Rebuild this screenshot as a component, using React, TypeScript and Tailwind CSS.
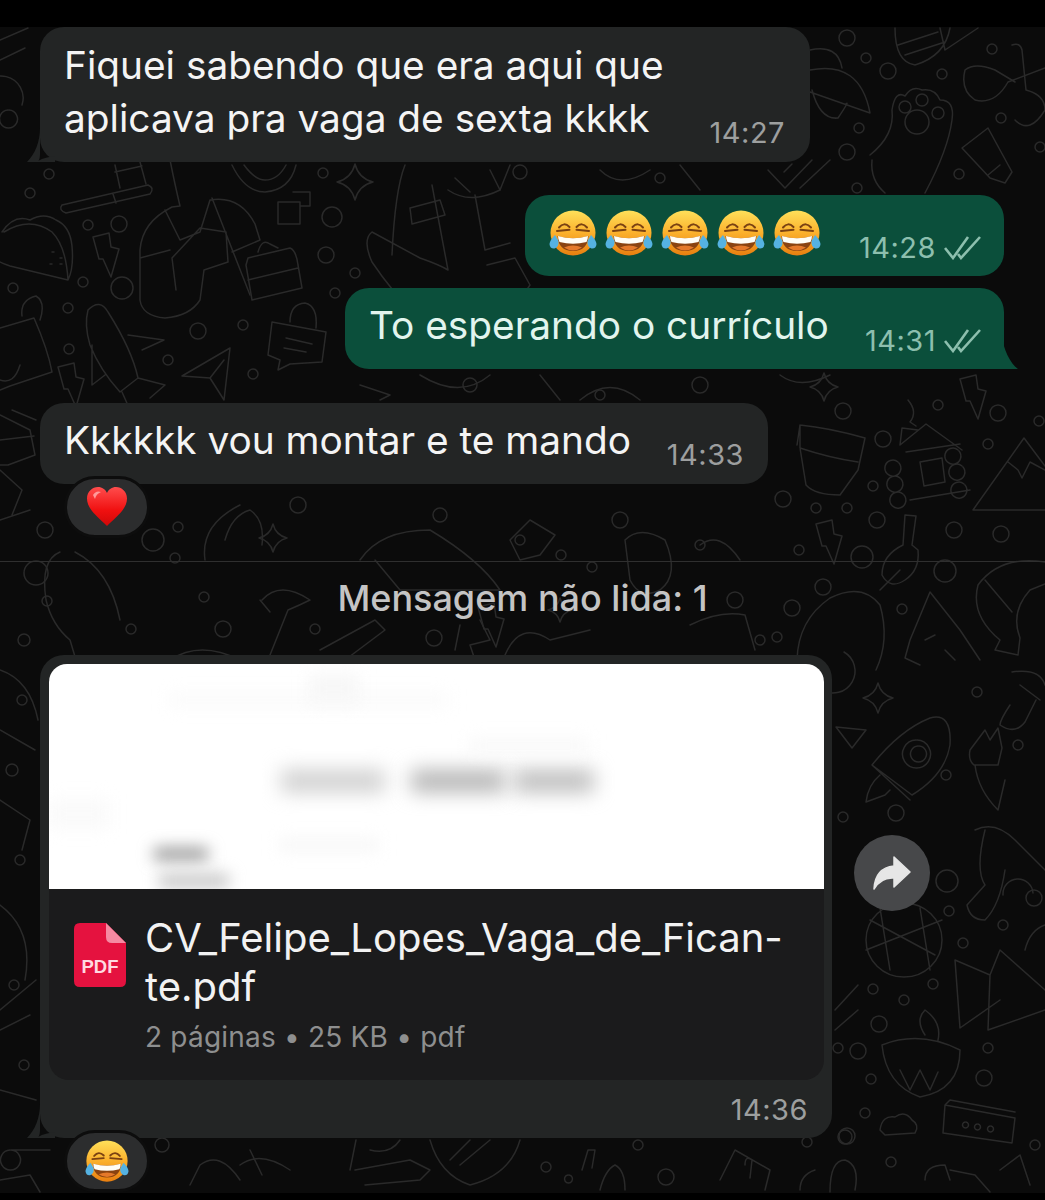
import React from 'react';

const FONT = 'font-["Inter","Liberation_Sans",sans-serif]';

// dots of the wallpaper: cx, cy, r
const dots: number[][] = [
    [49, 174, 5], [30, 193, 5], [88, 225, 5], [119, 224, 8], [83, 282, 5], [122, 288, 11], [13, 288, 5], [68, 308, 5],
    [69, 349, 5], [168, 360, 5], [198, 331, 8], [243, 325, 5], [253, 374, 5], [323, 173, 5], [332, 217, 10], [326, 255, 8],
    [355, 273, 5], [335, 293, 5], [847, 38, 8], [866, 58, 5], [888, 71, 8], [942, 74, 5], [992, 49, 5], [859, 128, 5],
    [847, 152, 8], [1001, 118, 5], [959, 174, 5], [1040, 147, 5], [857, 188, 5], [843, 411, 8], [938, 405, 5], [998, 413, 8],
    [1039, 421, 5], [883, 439, 8], [988, 444, 5], [873, 486, 5], [783, 499, 8], [816, 508, 5], [847, 508, 5], [877, 520, 8],
    [799, 550, 5], [862, 557, 11], [954, 530, 8], [1001, 534, 8], [945, 571, 11], [823, 587, 8], [792, 608, 8], [777, 637, 5],
    [902, 609, 5], [947, 881, 11], [949, 911, 5], [1034, 898, 8], [1003, 925, 5], [963, 943, 5], [873, 989, 5], [933, 984, 5],
    [904, 1000, 5], [879, 1024, 8], [858, 1051, 8], [838, 1048, 5], [988, 1048, 5], [984, 1078, 8], [871, 1079, 5], [865, 1113, 5],
    [847, 1136, 8], [1035, 1145, 5], [807, 1142, 5], [977, 692, 5], [1018, 745, 5], [946, 775, 5], [896, 813, 8], [843, 817, 5],
    [153, 540, 11], [36, 573, 12], [47, 601, 5], [131, 629, 5], [223, 629, 8], [204, 597, 5], [315, 629, 5], [434, 638, 8],
    [561, 555, 5], [592, 567, 5], [45, 530, 8], [178, 527, 5], [298, 505, 8], [175, 558, 5], [162, 1145, 7], [546, 1167, 5],
    [638, 1145, 5], [845, 1137, 7], [891, 1162, 5], [666, 1177, 8], [14, 985, 5], [24, 1065, 5], [12, 770, 6], [22, 700, 5],
    [440, 515, 7], [520, 540, 5], [620, 520, 8], [700, 545, 5], [735, 600, 8], [760, 640, 5], [600, 395, 5], [470, 385, 7],
    [700, 385, 8], [660, 178, 5], [520, 172, 7], [20, 860, 5], [24, 640, 6],
];

const star = (cx: number, cy: number, r: number) =>
    `M${cx} ${cy - r}Q${cx + r * 0.2} ${cy - r * 0.2} ${cx + r} ${cy}Q${cx + r * 0.2} ${cy + r * 0.2} ${cx} ${cy + r}Q${cx - r * 0.2} ${cy + r * 0.2} ${cx - r} ${cy}Q${cx - r * 0.2} ${cy - r * 0.2} ${cx} ${cy - r}Z`;

const bolt = (x: number, y: number) =>
    `M${x - 12} ${y - 18}L${x + 4} ${y - 22}L${x + 6} ${y - 8}L${x + 14} ${y - 6}L${x + 6} ${y + 22}L${x - 2} ${y + 4}L${x - 6} ${y + 4}Z`;

const doodles: string[] = [
    star(355, 182, 18), star(824, 387, 14), star(878, 698, 15), star(273, 538, 14), star(560, 610, 12),
    bolt(105, 255), bolt(972, 397), bolt(828, 542), bolt(70, 385), bolt(490, 625),
    // pen, top left
    'M62 205L148 185Q155 188 150 194L66 213Q58 210 62 205ZM113 194L116 203',
    'M115 165L120 188M140 162L146 184M115 172L142 166',
    // taco
    'M2 232Q14 214 30 220Q44 212 56 220Q70 226 72 246Q74 268 68 280L10 266Q-2 262 -6 258M4 232Q30 216 52 232Q66 246 68 280M52 252h2M60 258h2M50 264h2M60 264h2',
    // person with phone
    'M170 160Q175 185 180 206L172 207Q142 222 140 250L140 300Q142 316 165 318Q190 316 200 300L204 270L228 262L226 232L200 228L172 258L176 290M140 258L170 250M165 210L180 240L200 232L210 200Q240 195 255 224L260 240L232 252M212 198L250 295',
    // briefcase
    'M248 258L290 248Q296 250 298 265L302 288L252 300L246 265ZM248 280L298 268M258 252Q262 238 270 244L278 248',
    // legs on the middle
    'M405 165Q395 190 392 255M410 208L440 200L445 215L412 224ZM432 185L448 270Q440 265 420 258L372 232Q362 240 372 262Q392 292 420 320M448 190Q470 205 500 190L510 165M475 195L485 250L510 243M487 265L515 258L530 285L520 300Q490 300 485 322',
    // square and arcs
    'M278 202L300 202L300 224L278 224ZM293 192L310 192L310 206L300 206',
    'M232 165Q245 192 265 192Q290 190 296 165M244 165Q255 180 265 180Q278 180 286 165',
    // shuttle
    'M88 310Q100 298 108 312Q132 350 138 378L120 392Q100 370 90 345Q84 325 88 310ZM128 335L164 340L142 350M92 345L92 385L105 375M122 392L130 410M138 378L165 385L150 398',
    // paper plane
    'M182 376L230 348L224 400L210 378L182 376ZM210 378L224 360',
    // chat with lock
    'M272 322L326 332L322 362L290 364L278 370L280 360L268 355ZM290 322Q290 304 305 303Q318 306 316 328M286 338L312 344M284 348L306 352',
    // bag left
    'M0 328L34 318Q48 350 52 372L10 386L0 390M22 316Q20 300 36 296Q46 302 40 320M0 380Q14 385 20 365',
    // hat over first bubble
    'M810 70Q860 60 870 113L810 92M812 90Q820 120 838 118Q850 100 846 104',
    'M810 50Q838 44 842 68',
    'M895 28Q895 62 915 65Q945 56 950 28M898 45L938 32M905 55L945 42M940 28L945 50Q960 40 978 28',
    // paw
    'M870 155Q895 135 892 110Q895 90 905 96Q912 85 922 90Q935 88 940 100Q955 100 952 120Q948 150 925 193M872 160Q870 180 885 193',
    'M905 122a12 12 0 1 0 24 0a12 12 0 1 0 -24 0ZM899 107a6 6 0 1 0 12 0a6 6 0 1 0 -12 0ZM916 100a6 6 0 1 0 12 0a6 6 0 1 0 -12 0ZM932 113a6 6 0 1 0 12 0a6 6 0 1 0 -12 0Z',
    // tube
    'M962 148L988 128L1012 172L1005 183L990 178ZM988 175L1000 165',
    // scissors
    'M1045 68L1008 82Q995 105 975 100Q960 90 965 70Q975 62 995 70L1015 82M1012 45Q1020 42 1022 50L1026 90Q1045 95 1045 110Q1030 135 1015 120',
    // tick pair
    'M768 170L785 188L812 160M784 172L792 164M800 188L830 160',
    // pot
    'M800 425Q830 428 865 438L858 470L840 495Q815 495 806 485L800 448ZM800 448Q830 458 858 462M800 425L797 445',
    // cabin
    'M900 445L926 424L962 450M900 445L902 428L918 430M906 452L960 444M920 462L942 458L945 482L924 486ZM898 462a8 8 0 1 0 1 1M900 478a8 8 0 1 0 1 1M903 494a8 8 0 1 0 1 1M958 450a8 8 0 1 0 1 1M962 466a8 8 0 1 0 1 1M964 484a8 8 0 1 0 1 1M910 500L970 490',
    'M908 400Q918 412 910 422L916 426',
    // mountain
    'M973 510L1024 438L1045 466M973 510L1045 510M1008 462L1018 470L1022 478L1030 462L1045 470',
    // bottle
    'M905 515L903 545Q882 555 882 575Q890 590 905 580Q920 570 918 550L912 545L916 516Z',
    // avocado
    'M797 660Q798 620 830 598Q862 582 880 605Q890 640 876 670M814 660a22 22 0 1 0 30 -8M880 590L900 570',
    // tree
    'M930 592L910 640L905 658L920 665M930 592L960 630L980 660M925 640L935 635M945 650L955 660',
    // shrimp
    'M1045 562Q1000 555 978 585Q970 615 1000 640L995 650L1018 655L1020 638Q1010 612 1030 590L1045 584M985 580L1012 612',
    // rocket right
    'M872 765Q900 730 930 718Q952 712 950 745Q945 775 912 795ZM872 765L910 800M916 740a14 14 0 1 0 1 0M918 746a8 8 0 1 0 1 0M880 775Q868 785 866 802L885 795L890 790',
    // plane
    'M836 727L866 730L852 748Z',
    // hand peace
    'M970 750L985 730L990 740L998 728L1002 748L998 765L974 765Q968 760 970 750ZM975 765Q978 790 998 810L1005 780',
    'M1010 705Q1000 720 1000 725Q1015 735 1025 722L1036 700M1012 672Q1040 668 1045 685M1020 685L1040 700',
    // globe
    'M866 940a38 37 0 1 0 76 0a38 37 0 1 0 -76 0ZM870 920L935 955M866 950L942 920M880 908L890 970M920 908L930 970',
    // tent
    'M955 960L990 975L1000 950L1045 990M955 960L960 1028L1000 1000M990 975L988 1030L1045 1010',
    // lamp
    'M882 1045Q920 1030 960 1050Q960 1090 920 1097Q886 1085 882 1045ZM925 1035Q915 1020 925 1010Q942 1022 938 1040M900 1070L910 1090L920 1070L930 1090L938 1072',
    // box 000
    'M945 1105L1015 1118L1012 1143L943 1133ZM945 1105L950 1100L1015 1112',
    'M965 1122a3 3 0 1 0 1 0M977 1124a3 3 0 1 0 1 0M990 1126a3 3 0 1 0 1 0',
    // hand next to forward
    'M975 830Q995 820 1015 840L1045 870M985 830Q975 870 985 885L967 905Q970 920 985 920Q1000 905 1005 870M1003 895a8 8 0 0 1 30 -2',
    'M835 1010L858 985M835 1030L858 1010',
    // cloud
    'M880 1130Q882 1115 895 1117Q905 1110 912 1120Q920 1125 915 1133L885 1135Z',
    'M1025 950Q1030 930 1045 925',
    // under the bubbles
    'M190 1185L200 1165Q220 1150 240 1180M240 1165Q260 1150 290 1170M250 1150L262 1175',
    'M350 1170L356 1140M365 1185L420 1180L430 1170L410 1160L355 1170M370 1150Q390 1155 400 1140',
    'M430 1140Q440 1175 470 1185Q510 1175 520 1140M450 1160L470 1140M460 1165L490 1140',
    'M568 1175a4 4 0 1 0 1 0M582 1170L588 1150L595 1150L592 1168',
    'M600 1190Q605 1170 615 1165Q625 1170 625 1190',
    'M720 1180L735 1150L770 1170L765 1190M745 1165Q745 1155 752 1160L750 1178',
    'M830 1192Q830 1160 845 1160Q860 1165 855 1190M800 1190Q800 1175 815 1170',
    'M925 1180Q925 1165 945 1165L950 1180M950 1170L975 1175L990 1192',
    'M1000 1170L1020 1155L1030 1185',
    // reaction row and divider row
    'M60 552Q40 560 46 600Q52 625 70 640L76 660M75 552Q110 570 120 620',
    'M262 600Q280 580 310 600Q300 605 288 610L270 655M270 612L260 600',
    'M170 660Q200 640 240 660',
    'M320 650L375 620L385 630L345 660',
    'M460 625L455 650M480 620L490 640L470 645L475 660',
    'M225 540Q232 515 250 510Q265 520 262 545M205 560Q200 525 240 505',
    'M360 560Q380 530 430 530Q480 560 500 590L400 590L375 560',
    'M510 540L530 520L555 535L540 555L520 560Z',
    'M625 540Q640 525 665 540Q680 575 660 590Q640 600 630 580Z',
    'M700 545Q720 530 740 560M690 625Q720 610 745 615L755 650',
    'M0 520L30 510M0 470L22 490L12 515M12 410L36 420',
    'M505 655Q520 620 550 640L590 630',
    'M0 415L30 430L35 455L8 465L0 465M0 440L34 436',
    'M0 120a22 22 0 1 1 22 -15M8 110a9 9 0 1 0 1 0',
    'M0 40L28 28M0 60L25 48',
    // left column next to the file bubble
    'M0 905Q34 930 25 980M0 1010L36 980M0 1030L30 1015',
    'M0 670Q30 680 38 720M0 730L35 750M0 800L30 820L22 850',
    'M0 1090L36 1100M10 1150a10 10 0 1 0 1 0L50 1150M0 1180L30 1175L40 1192',
    // chat gaps
    'M360 385L390 395L380 400M420 375Q460 400 490 375M540 375L560 400M580 400Q610 375 640 400',
    'M455 178L470 192M490 170L500 190M600 170Q620 190 650 170M680 165L700 190',
    'M780 375Q800 390 830 375',
];

const JoyEmoji = ({ size, id }: { size: number; id: string }) => (
    <svg width={size} height={size} viewBox="0 0 48 48" className="block shrink-0">
        <defs>
            <linearGradient id={id} x1="0" y1="0" x2="0" y2="1">
                <stop offset="0" stopColor="#ffe05a" />
                <stop offset="0.5" stopColor="#fbb02c" />
                <stop offset="1" stopColor="#e87f10" />
            </linearGradient>
        </defs>
        <circle cx="24" cy="24" r="22.5" fill={`url(#${id})`} />
        <path d="M8.5 27Q24 31.5 39.5 27Q38.5 42 24 42Q9.5 42 8.5 27Z" fill="#8a4310" />
        <path d="M9 27Q24 31.5 39 27Q39 30.5 37.5 33Q24 36.5 10.5 33Q9 30.5 9 27Z" fill="#fffdf5" />
        <path d="M15 38.5Q24 34.5 33 38.5Q28.5 41.5 24 41.5Q19.5 41.5 15 38.5Z" fill="#e5792a" />
        <path d="M10 18.5Q15 12.5 20.5 18M8 22L20.5 20.8M38 18.5Q33 12.5 27.5 18M40 22L27.5 20.8" fill="none" stroke="#7a4112" strokeWidth="2" strokeLinecap="round" />
        <path d="M6 26Q1 31 0.5 35Q1 40 5.5 39.5Q10 38 9.5 32Z" fill="#55b2e2" />
        <path d="M42 26Q47 31 47.5 35Q47 40 42.5 39.5Q38 38 38.5 32Z" fill="#55b2e2" />
    </svg>
);

const HeartEmoji = () => (
    <svg width="42" height="42" viewBox="0 0 42 42" className="block">
        <defs>
            <linearGradient id="heart" x1="0" y1="0" x2="0" y2="1">
                <stop offset="0" stopColor="#ff4d4d" />
                <stop offset="0.6" stopColor="#f01010" />
                <stop offset="1" stopColor="#d00808" />
            </linearGradient>
        </defs>
        <path d="M21 40C11 30 1 23 1 12.5C1 5.5 6.5 1 12 1C16 1 19.5 3.5 21 7C22.5 3.5 26 1 30 1C35.5 1 41 5.5 41 12.5C41 23 31 30 21 40Z" fill="url(#heart)" />
        <path d="M7 9Q10 4 15 6Q10 8 9 13Z" fill="#ff9a9a" />
    </svg>
);

const DoubleTick = () => (
    <svg width="37" height="24" viewBox="0 0 37 24" fill="none" stroke="#8dbfae" strokeWidth="2.6" className="shrink-0">
        <path d="M1 12L9 22L24 1" />
        <path d="M14 18L17 22L36 1" />
    </svg>
);

const Reaction = ({ children }: { children: React.ReactNode }) => (
    <div className="relative ml-[64px] -mt-[8px] flex h-[62px] w-[86px] items-center justify-center rounded-full border-[3px] border-[#0d0d0d] bg-[#2c2d2e]">
        {children}
    </div>
);

const InTail = () => (
    <svg width="40" height="34" viewBox="0 0 40 34" className="absolute bottom-0 left-[-13px]">
        <path d="M13 0C13 14 8 26 0 34H28V28C22 29 16 30 11 33C12 33 13 30 13 26Z" fill="#232525" />
    </svg>
);

const OutTail = () => (
    <svg width="34" height="34" viewBox="0 0 34 34" className="absolute bottom-0 right-[-16px]">
        <path d="M16 0C17 14 24 28 32 34H0V0Z" fill="#0b4f3b" />
    </svg>
);

export default function App() {
    return (
        <div className={`relative flex h-[1200px] w-[1045px] flex-col overflow-hidden bg-[#0b0b0b] ${FONT}`}>
            {/* wallpaper */}
            <svg viewBox="0 0 1045 1200" fill="none" stroke="#2a2a2a" strokeWidth="1.5" strokeLinecap="round" strokeLinejoin="round" className="absolute inset-0 h-[1200px] w-[1045px]">
                {dots.map(([cx, cy, r], i) => (
                    <circle key={i} cx={cx} cy={cy} r={r} />
                ))}
                {doodles.map((d, i) => (
                    <path key={i} d={d} />
                ))}
            </svg>

            <div className="relative h-[27px] shrink-0 bg-black" />

            <div className="relative flex flex-1 flex-col">
                {/* first message */}
                <div className="relative ml-[40px] flex h-[135px] w-[770px] rounded-[24px] bg-[#232525] pl-[24px] pr-[25px] pt-[11px]">
                    <InTail />
                    <p className="relative text-[38.8px] leading-[53px] text-[#f4f4f4]">
                        Fiquei sabendo que era aqui que
                        <br />
                        aplicava pra vaga de sexta kkkk
                    </p>
                    <span className="absolute bottom-[13px] right-[25px] text-[29px] leading-[32px] tracking-[0.5px] text-[#9d9f9f]">14:27</span>
                </div>

                {/* sent */}
                <div className="ml-[525px] mt-[33px] flex h-[81px] w-[479px] items-center rounded-[24px] bg-[#0b4f3b] pl-[24px] pr-[23px]">
                    <div className="-mt-[6px] flex gap-[8px]">
                        <JoyEmoji size={48} id="j1" />
                        <JoyEmoji size={48} id="j2" />
                        <JoyEmoji size={48} id="j3" />
                        <JoyEmoji size={48} id="j4" />
                        <JoyEmoji size={48} id="j5" />
                    </div>
                    <div className="ml-auto mt-[24px] flex items-center gap-[8px]">
                        <span className="text-[29px] leading-[32px] tracking-[0.5px] text-[#8dbfae]">14:28</span>
                        <DoubleTick />
                    </div>
                </div>

                <div className="relative ml-[345px] mt-[12px] flex h-[81px] w-[659px] items-center rounded-[24px] rounded-br-none bg-[#0b4f3b] pl-[24px] pr-[23px]">
                    <OutTail />
                    <span className="relative -mt-[9px] text-[38.8px] leading-[53px] text-[#e2f5ee]">To esperando o currículo</span>
                    <div className="relative ml-auto mt-[24px] flex items-center gap-[8px]">
                        <span className="text-[29px] leading-[32px] tracking-[0.5px] text-[#8dbfae]">14:31</span>
                        <DoubleTick />
                    </div>
                </div>

                {/* received with reaction */}
                <div className="relative ml-[40px] mt-[34px] flex h-[81px] w-[728px] items-center rounded-[24px] bg-[#232525] pl-[24px] pr-[24px]">
                    <span className="-mt-[9px] text-[38.8px] leading-[53px] text-[#f4f4f4]">Kkkkkk vou montar e te mando</span>
                    <span className="ml-auto mt-[22px] text-[29px] leading-[32px] tracking-[0.5px] text-[#9d9f9f]">14:33</span>
                </div>
                <Reaction>
                    <HeartEmoji />
                </Reaction>

                {/* unread divider */}
                <div className="relative mt-[23px] h-px w-full bg-[#2f2f2f]" />
                <div className="relative mt-[15px] text-center text-[36px] font-medium leading-[42px] text-[#c4c4c4]">Mensagem não lida: 1</div>

                {/* file message */}
                <div className="relative mt-[36px] flex">
                    <div className="relative ml-[40px] h-[483px] w-[792px] rounded-[24px] bg-[#232525] pl-[9px] pr-[8px] pt-[9px]">
                        <InTail />
                        <div className="relative h-[225px] overflow-hidden rounded-t-[18px] bg-white">
                            <div className="absolute left-[232px] top-[106px] h-[22px] w-[104px] bg-[#cfcfcf] blur-[10px]" />
                            <div className="absolute left-[362px] top-[106px] h-[22px] w-[94px] bg-[#b4b4b4] blur-[10px]" />
                            <div className="absolute left-[465px] top-[106px] h-[22px] w-[80px] bg-[#bcbcbc] blur-[10px]" />
                            <div className="absolute left-[105px] top-[184px] h-[12px] w-[54px] bg-[#8f8f8f] blur-[8px]" />
                            <div className="absolute left-[110px] top-[210px] h-[14px] w-[70px] bg-[#c4c4c4] blur-[8px]" />
                            <div className="absolute left-[120px] top-[30px] h-[12px] w-[280px] bg-[#fafafa] blur-[8px]" />
                            <div className="absolute left-[260px] top-[10px] h-[30px] w-[50px] bg-[#f7f7f7] blur-[8px]" />
                            <div className="absolute left-[420px] top-[75px] h-[14px] w-[120px] bg-[#f8f8f8] blur-[8px]" />
                            <div className="absolute left-[230px] top-[175px] h-[12px] w-[100px] bg-[#f6f6f6] blur-[8px]" />
                            <div className="absolute left-[0px] top-[135px] h-[30px] w-[60px] bg-[#fafafa] blur-[8px]" />
                        </div>
                        <div className="relative flex h-[191px] rounded-b-[20px] bg-[#1b1b1c] pl-[25px] pt-[22px]">
                            <div className="relative mt-[12px] h-[64px] w-[52px] shrink-0">
                                <svg width="52" height="64" viewBox="0 0 52 64" className="block">
                                    <path d="M6 0H32L52 20V58Q52 64 46 64H6Q0 64 0 58V6Q0 0 6 0Z" fill="#e5123f" />
                                    <path d="M32 0L52 20H38Q32 20 32 14Z" fill="#f58aa2" />
                                </svg>
                                <span className="absolute inset-x-0 top-[34px] text-center font-['Liberation_Sans',sans-serif] text-[18.5px] font-bold leading-[20px] text-[#ffd9e2]">PDF</span>
                            </div>
                            <div className="ml-[19px] mt-[2px]">
                                <p className="text-[40px] leading-[49px] text-[#f2f2f2]">
                                    CV_Felipe_Lopes_Vaga_de_Fican-
                                    <br />
                                    te.pdf
                                </p>
                                <p className="mt-[8px] text-[28px] leading-[36px] tracking-[0.2px] text-[#8e8f8f]">2 páginas • 25 KB • pdf</p>
                            </div>
                        </div>
                        <div className="mt-[14px] pr-[16px] text-right text-[29px] leading-[32px] tracking-[0.5px] text-[#9d9f9f]">14:36</div>
                    </div>
                    <div className="ml-[22px] mt-[180px] flex h-[76px] w-[76px] items-center justify-center rounded-full bg-[#47484a]">
                        <svg width="38" height="34" viewBox="0 0 38 34" className="block">
                            <path d="M21 1L37 16L21 31V22Q8 21 1 33Q2 12 21 10Z" fill="#e6e6e6" stroke="#e6e6e6" strokeWidth="1.5" strokeLinejoin="round" />
                        </svg>
                    </div>
                </div>
                <Reaction>
                    <JoyEmoji size={44} id="j6" />
                </Reaction>
            </div>

            <div className="relative h-[7px] shrink-0 bg-black" />
        </div>
    );
}
